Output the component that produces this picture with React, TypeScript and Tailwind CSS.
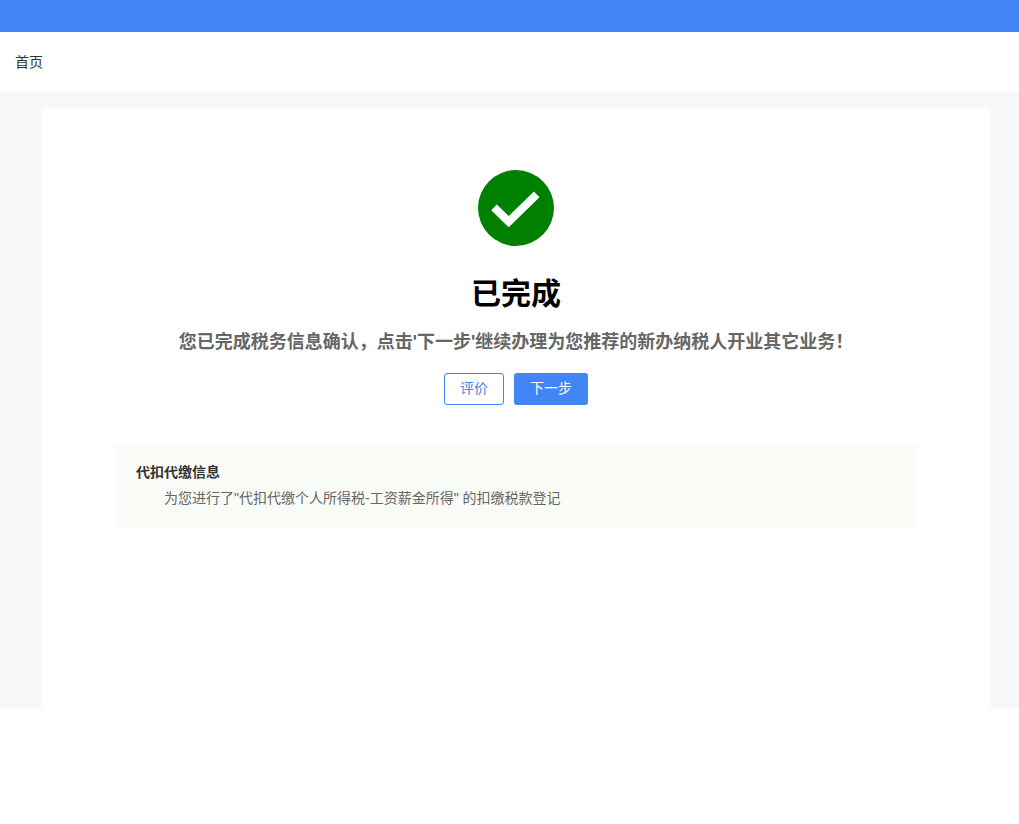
import React from 'react';

const App = () => {
  return (
    <div className="h-[824px] bg-white font-['Liberation_Sans','Noto_Sans_CJK_SC',sans-serif]">
      <div className="h-8 bg-[#4285f4]" />
      <div className="flex h-[60px] items-center px-[15px] text-sm text-[#333333]">首页</div>
      <div className="h-[616px] overflow-hidden bg-[#f7f8fa] pt-4 pr-[29px] pl-[42px]">
        <div className="flex h-full flex-col items-center bg-white pt-[62px]">
          <div className="flex h-[76px] w-[76px] items-center justify-center rounded-full bg-[#008000]">
            <svg width="50" height="38" viewBox="0 0 50 38" fill="none">
              <path d="M3 18.3 L17.7 32.7 L45.7 5.3" stroke="white" strokeWidth="8" />
            </svg>
          </div>
          <h1 className="mt-[27px] text-[30px] leading-[42px] font-bold text-black">已完成</h1>
          <p className="mt-[14px] text-lg leading-[26px] font-bold text-[#666666]">
            您已完成税务信息确认，点击'下一步'继续办理为您推荐的新办纳税人开业其它业务！
          </p>
          <div className="mt-[18px] flex gap-[10px]">
            <button className="h-8 w-[60px] rounded-[3px] border border-[#4285f4] bg-white pb-[2px] text-sm text-[#4285f4]">评价</button>
            <button className="h-8 w-[74px] rounded-[3px] bg-[#4285f4] pb-[2px] text-sm text-white">下一步</button>
          </div>
          <div className="mt-10 h-[82px] w-[800px] bg-[#f9fbf7] px-5 pt-4 text-sm leading-[22px]">
            <div className="font-bold text-[#333333]">代扣代缴信息</div>
            <div className="mt-[4px] pl-7 text-[#666666]">为您进行了"代扣代缴个人所得税-工资薪金所得" 的扣缴税款登记</div>
          </div>
        </div>
      </div>
    </div>
  );
};

export default App;
